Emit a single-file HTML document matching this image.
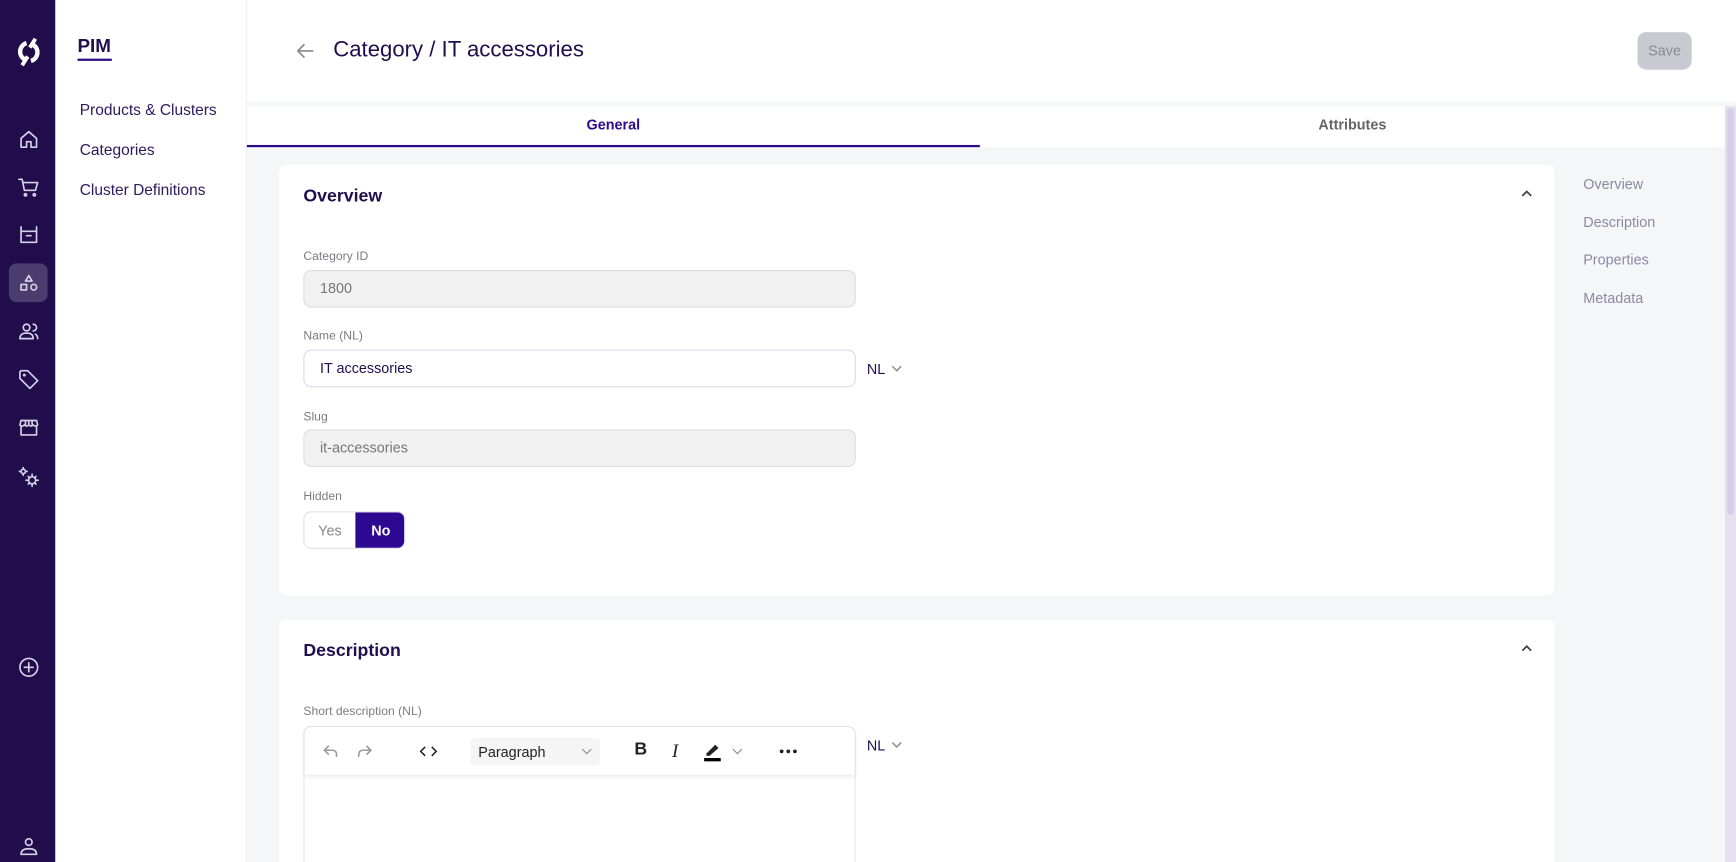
<!DOCTYPE html>
<html><head><meta charset="utf-8"><style>
html,body{margin:0;padding:0;width:1736px;height:862px;overflow:hidden;background:#f5f6f8}
#w{position:absolute;left:0;top:0;width:1568px;height:779px;overflow:hidden;transform:scale(1.10714,1.1066);transform-origin:0 0;font-family:"Liberation Sans",sans-serif;background:#f5f6f8}
.abs{position:absolute}
.sb{left:0;top:0;width:50px;height:779px;background:#210d4b}
.sb svg{position:absolute;left:15px;width:22px;height:22px;fill:none;stroke:#d6d0e6;stroke-width:1.5;stroke-linecap:round;stroke-linejoin:round}
.nav{left:50px;top:0;width:173px;height:779px;background:#fff;border-right:1px solid #eee;box-sizing:border-box}
.nav a{position:absolute;left:22px;font-size:14px;color:#2a1a5e}
.hdr{left:223px;top:0;width:1345px;height:92px;background:#fff}
.tabs{left:223px;top:96px;width:1335px;height:37px;background:#fff}
.card{background:#fff;border-radius:6px}
.h{font-size:16px;font-weight:bold;color:#1e0f4f}
.lbl{font-size:11px;color:#7b7b85}
.inp{width:499px;height:34px;box-sizing:border-box;border-radius:7px;font-size:13px;padding-left:14px;line-height:32px}
.dis{background:#f1f1f1;border:1px solid #ddd;color:#777}
.rn{left:1430px;font-size:13px;color:#8b8aa3}
.chev{stroke:#444;fill:none;stroke-width:1.6}
</style></head><body><div id="w">
<div class="abs sb">
<svg style="left:11px;top:32px;width:30px;height:30px;stroke:#fff;stroke-width:4;stroke-linecap:butt" viewBox="0 0 30 30"><path d="M19 8.5 A8 8 0 0 1 17 23"/><path d="M11 21.5 A8 8 0 0 1 13 7"/><path d="M21 3 L16 11 M9 27 L14 19" stroke-width="3.5"/></svg>
<svg style="top:115px" viewBox="0 0 22 22"><path d="M4 10 L11 4 L18 10 V18 H13 V13 H9 V18 H4Z"/></svg>
<svg style="top:158px" viewBox="0 0 22 22"><path d="M2 4 H5 L7 14 H17 L19 7 H6"/><circle cx="8" cy="18" r="1"/><circle cx="16" cy="18" r="1"/></svg>
<svg style="top:201px" viewBox="0 0 22 22"><path d="M4 4 V18 H18 V4 M4 8 H18 M9 12 H13"/></svg>
<div class="abs" style="left:8px;top:238px;width:35px;height:35px;border-radius:7px;background:#4a3c6e"></div>
<svg style="top:245px" viewBox="0 0 22 22"><path d="M11 4 L14 9 H8Z"/><rect x="4" y="12" width="5" height="5"/><circle cx="15.5" cy="14.5" r="2.6"/></svg>
<svg style="top:288px" viewBox="0 0 22 22"><circle cx="9" cy="8" r="3"/><path d="M3 18 Q3 13 9 13 Q15 13 15 18Z M15 5 A3 3 0 0 1 15 11 M17 14 Q19 15 19 18"/></svg>
<svg style="top:332px" viewBox="0 0 22 22"><path d="M3 4 V10 L12 19 L19 12 L10 3 H4Z"/><circle cx="7" cy="7" r=".6"/></svg>
<svg style="top:375px" viewBox="0 0 22 22"><path d="M4 5 H18 L19 9 Q17 11 15 9 Q13 11 11 9 Q9 11 7 9 Q5 11 3 9Z M4 10 V18 H18 V10 M8 5 V9 M11 5 V9 M14 5 V9"/></svg>
<svg style="top:420px" viewBox="0 0 22 22"><circle cx="6" cy="6" r="2"/><circle cx="14" cy="14" r="3.2"/><path d="M6 2.5V3.5M6 8.5V9.5M2.5 6H3.5M8.5 6H9.5M14 8.5V10M14 18V19.5M8.5 14H10M18 14H19.5M10.5 10.5L11.3 11.3M16.7 16.7L17.5 17.5M17.5 10.5L16.7 11.3M10.5 17.5L11.3 16.7"/></svg>
<svg style="top:592px" viewBox="0 0 22 22"><circle cx="11" cy="11" r="8"/><path d="M11 7V15M7 11H15"/></svg>
<svg style="top:754px" viewBox="0 0 22 22"><circle cx="11" cy="7" r="3"/><path d="M4 18 Q4 13 11 13 Q18 13 18 18Z"/></svg>
</div>
<div class="abs nav">
<div class="abs" style="left:20px;top:32px;font-size:17px;font-weight:bold;color:#1e0f4f">PIM</div>
<div class="abs" style="left:20px;top:53px;width:31px;height:2px;background:#2d0a8c"></div>
<a style="top:91px">Products &amp; Clusters</a>
<a style="top:127px">Categories</a>
<a style="top:163px">Cluster Definitions</a>
</div>
<div class="abs hdr">
<svg class="abs" style="left:44px;top:38px" width="18" height="16" viewBox="0 0 18 16"><path d="M16 8H2M8 2L2 8L8 14" fill="none" stroke="#888" stroke-width="1.5"/></svg>
<div class="abs" style="left:78px;top:34px;font-size:20px;color:#1e0f4f">Category / IT accessories</div>
<div class="abs" style="left:1256px;top:29px;width:49px;height:34px;border-radius:8px;background:#c9c9d1;color:#8a8a92;font-size:13px;line-height:34px;text-align:center">Save</div>
</div>
<div class="abs tabs">
<div class="abs" style="left:0;width:662px;text-align:center;top:9px;font-size:13px;font-weight:bold;color:#2d0a8c">General</div>
<div class="abs" style="left:0;top:35px;width:662px;height:2px;background:#2d0a8c"></div>
<div class="abs" style="left:662px;width:673px;text-align:center;top:9px;font-size:13px;font-weight:bold;color:#666">Attributes</div>
</div>
<div class="abs" style="left:1558px;top:96px;width:10px;height:683px;background:#e4e0f0"></div>
<div class="abs" style="left:1560px;top:98px;width:6px;height:367px;background:#d4cfe6;border-radius:3px"></div>

<div class="abs card" style="left:252px;top:149px;width:1152px;height:389px">
<div class="abs h" style="left:22px;top:20px">Overview</div>
<svg class="abs" style="left:1121px;top:21px" width="12" height="10"><path class="chev" d="M2 7L6 3L10 7"/></svg>
<div class="abs lbl" style="left:22px;top:77px">Category ID</div>
<div class="abs inp dis" style="left:22px;top:95px">1800</div>
<div class="abs lbl" style="left:22px;top:149px">Name (NL)</div>
<div class="abs inp" style="left:22px;top:167px;border:1px solid #dcd8f0;color:#1e0f4f">IT accessories</div>
<div class="abs" style="left:531px;top:177px;font-size:13px;color:#1e0f4f">NL</div>
<svg class="abs" style="left:552px;top:179px" width="12" height="10"><path d="M2 3L6 7L10 3" fill="none" stroke="#888" stroke-width="1.3"/></svg>
<div class="abs lbl" style="left:22px;top:222px">Slug</div>
<div class="abs inp dis" style="left:22px;top:239px">it-accessories</div>
<div class="abs lbl" style="left:22px;top:294px">Hidden</div>
<div class="abs" style="left:22px;top:313px;width:92px;height:34px;border:1px solid #e0e0e6;border-radius:7px;box-sizing:border-box;overflow:hidden;font-size:13px">
<div class="abs" style="left:0;width:46px;top:9px;text-align:center;color:#888">Yes</div>
<div class="abs" style="left:46px;top:0;width:46px;height:34px;background:#2d0890;color:#fff;font-weight:bold;text-align:center;line-height:33px">No</div>
</div>
</div>

<div class="abs card" style="left:252px;top:560px;width:1152px;height:219px;border-radius:6px 6px 0 0">
<div class="abs h" style="left:22px;top:20px">Description</div>
<svg class="abs" style="left:1121px;top:21px" width="12" height="10"><path class="chev" d="M2 7L6 3L10 7"/></svg>
<div class="abs lbl" style="left:22px;top:77px">Short description (NL)</div>
<div class="abs" style="left:22px;top:96px;width:499px;height:123px;border:1px solid #e4e4e8;border-bottom:none;border-radius:7px 7px 0 0;box-sizing:border-box">
<div class="abs" style="left:0;top:0;width:497px;height:43px;box-shadow:0 2px 4px rgba(0,0,0,.08);border-radius:7px 7px 0 0">
<svg class="abs" style="left:16px;top:14px" width="70" height="16" viewBox="0 0 70 16" fill="none" stroke="#999" stroke-width="1.4"><path d="M6 3L2 7L6 11M2 7H9Q13 7 13 11V13"/><path d="M40 3L44 7L40 11M44 7H37Q33 7 33 11V13"/></svg>
<svg class="abs" style="left:104px;top:16px" width="16" height="12" fill="none" stroke="#222" stroke-width="1.4"><path d="M5 2L1 6L5 10M11 2L15 6L11 10"/></svg>
<div class="abs" style="left:150px;top:10px;width:117px;height:25px;background:#f5f5f6;border-radius:3px;font-size:13px;color:#222;line-height:25px;padding-left:7px;box-sizing:border-box">Paragraph</div>
<svg class="abs" style="left:250px;top:18px" width="10" height="8"><path d="M1 2L5 6L9 2" fill="none" stroke="#888"/></svg>
<div class="abs" style="left:298px;top:12px;font-size:16px;font-weight:bold;color:#222">B</div>
<div class="abs" style="left:332px;top:12px;font-size:17px;font-style:italic;font-family:'Liberation Serif',serif;color:#222">I</div>
<svg class="abs" style="left:360px;top:12px" width="18" height="20"><path d="M3 12L11 4L14 7L6 14H3Z" fill="#222"/><rect x="1" y="16" width="15" height="3" fill="#000"/></svg>
<svg class="abs" style="left:386px;top:18px" width="10" height="8"><path d="M1 2L5 6L9 2" fill="none" stroke="#888"/></svg>
<svg class="abs" style="left:428px;top:19px" width="18" height="6"><circle cx="3" cy="3" r="1.7" fill="#222"/><circle cx="9" cy="3" r="1.7" fill="#222"/><circle cx="15" cy="3" r="1.7" fill="#222"/></svg>
</div>
</div>
<div class="abs" style="left:531px;top:106px;font-size:13px;color:#1e0f4f">NL</div>
<svg class="abs" style="left:552px;top:108px" width="12" height="10"><path d="M2 3L6 7L10 3" fill="none" stroke="#888" stroke-width="1.3"/></svg>
</div>

<div class="abs rn" style="top:159px">Overview</div>
<div class="abs rn" style="top:193px">Description</div>
<div class="abs rn" style="top:227px">Properties</div>
<div class="abs rn" style="top:262px">Metadata</div>
</div></body></html>
